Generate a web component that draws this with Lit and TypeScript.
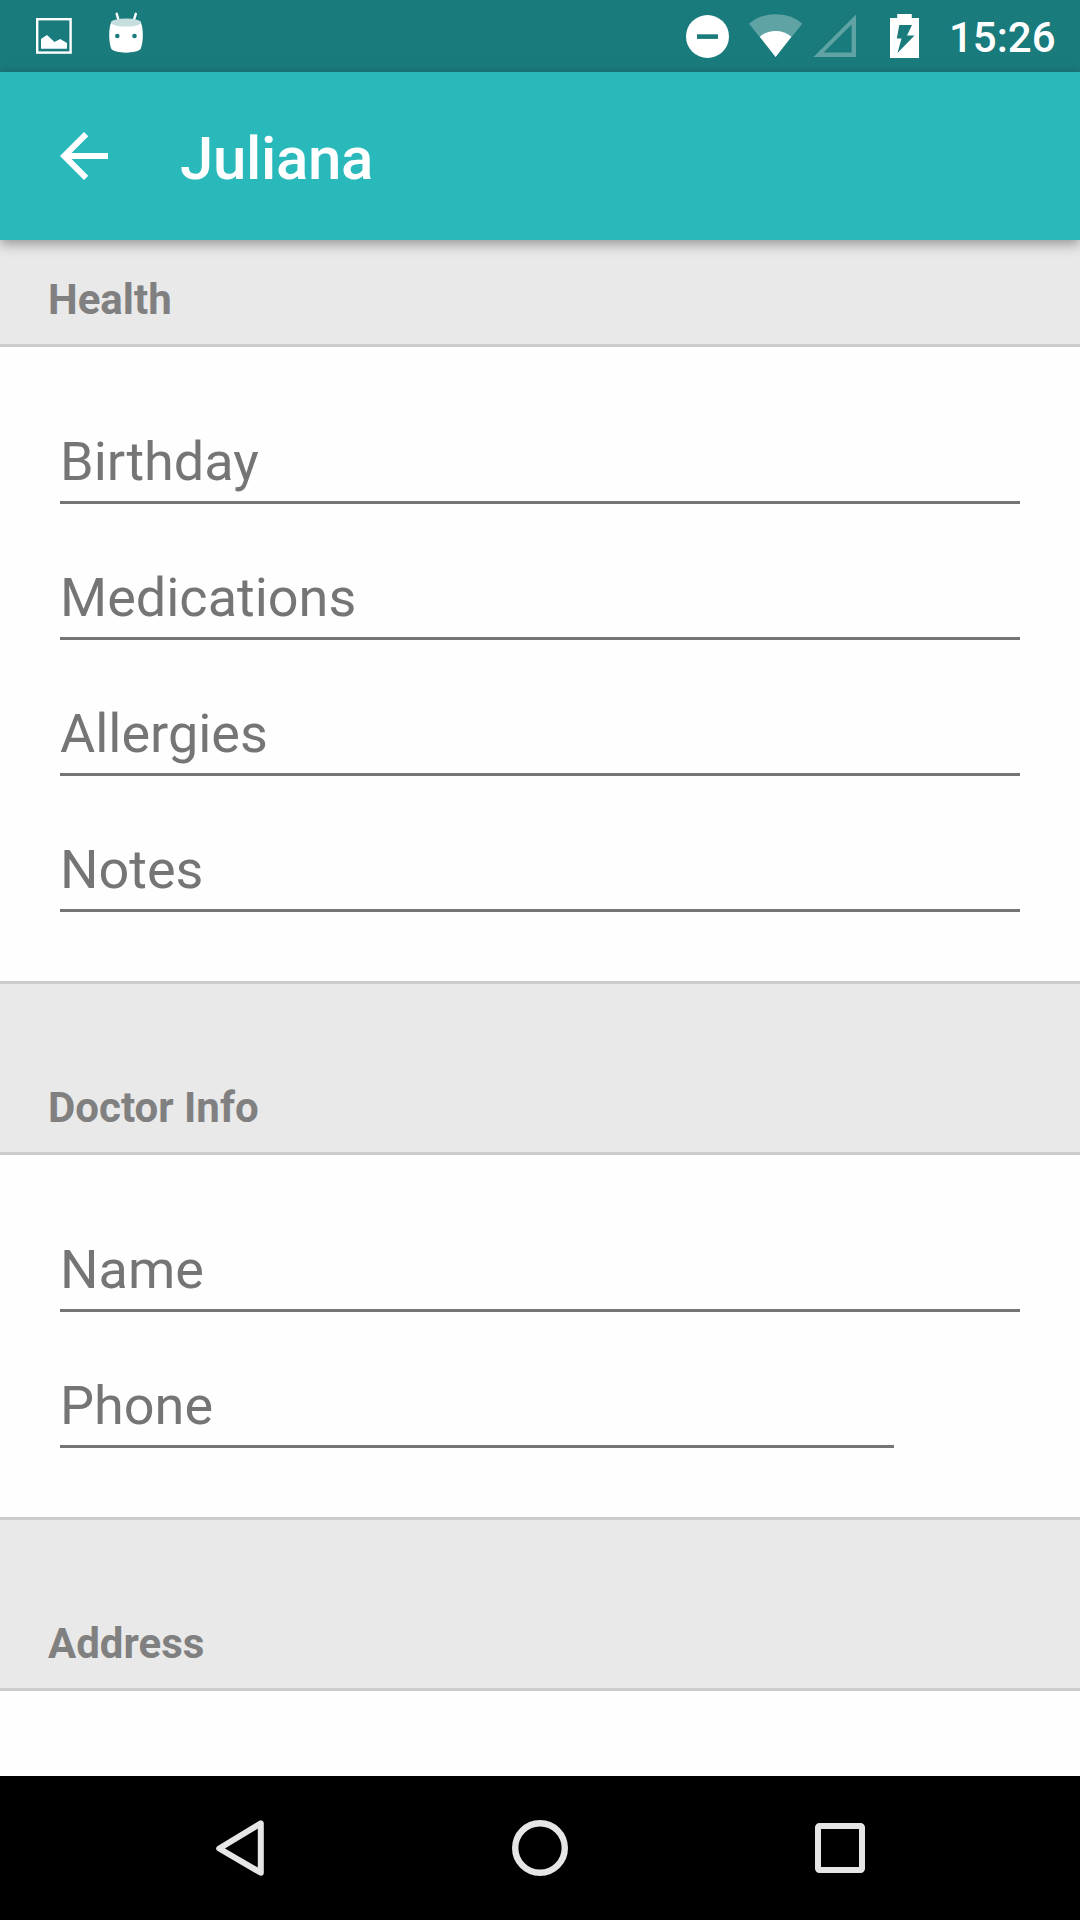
import { LitElement, html, css } from "lit";
import { customElement, property } from "lit/decorators.js";
import { classMap } from "lit/directives/class-map.js";

interface Field {
  label: string;
  short?: boolean;
}

interface Section {
  title: string;
  fields: Field[];
}

const SECTIONS: Section[] = [
  {
    title: "Health",
    fields: [
      { label: "Birthday" },
      { label: "Medications" },
      { label: "Allergies" },
      { label: "Notes" },
    ],
  },
  { title: "Doctor Info", fields: [{ label: "Name" }, { label: "Phone", short: true }] },
  { title: "Address", fields: [] },
];

@customElement("status-bar")
class StatusBar extends LitElement {
  @property() time = "";

  static styles = css`
    :host {
      display: flex;
      align-items: stretch;
      height: 72px;
      background: #1a7b7c;
      color: #fff;
    }
    svg {
      display: block;
      flex: none;
    }
    .spacer {
      flex: 1;
    }
    .time {
      width: 131px;
      margin-left: -1px;
      padding-top: 13px;
      box-sizing: border-box;
      font: 500 42px/49px Roboto, sans-serif;
      white-space: nowrap;
    }
  `;

  render() {
    return html`
      <svg width="160" height="72" viewBox="0 0 160 72">
        <rect x="37.2" y="19.2" width="33.4" height="33.4" fill="none" stroke="#fff" stroke-width="2.4" />
        <path d="M41 39l6-4 7.5 7 5.700-3 6.800 4v5.700H41z" fill="#fff" />
        <path d="M116.700 13.800l2.200 7.400M135.800 13.800l-2.200 7.400" stroke="#fff" stroke-width="2.400" stroke-linecap="round" />
        <path d="M111 23C108.600 28 108.500 42 111.200 48.500C113.500 54 138.500 54 140.800 48.500C143.500 42 143.400 28 141 23z" fill="#fff" />
        <ellipse cx="126" cy="22.600" rx="15.200" ry="4" fill="#c6dede" />
        <circle cx="117.300" cy="36" r="2.300" fill="#1a7b7c" />
        <circle cx="134.500" cy="36" r="2.300" fill="#1a7b7c" />
      </svg>
      <div class="spacer"></div>
      <svg width="270" height="72" viewBox="680 0 270 72">
        <circle cx="707.500" cy="36.500" r="21.500" fill="#fff" />
        <rect x="697" y="34.300" width="21" height="4.600" fill="#1a7b7c" />
        <path d="M775.600 57L749 23.700Q760 14.300 775.600 14.300T802.200 23.700z" fill="#5fa3a4" />
        <path d="M775.600 57L759.800 36.700Q766.500 31 775.600 31T791.400 36.700z" fill="#fff" />
        <path d="M813.500 57L856 14.500V57zM823.600 52.600H851.600V24.500z" fill="#5fa3a4" fill-rule="evenodd" />
        <path d="M897.200 14H911.800V18H919V58H890V18H897.200z" fill="#fff" />
        <path d="M899.300 25H912L907 35.500H914.500L897.500 53L901.500 38.500H896.800z" fill="#1a7b7c" />
      </svg>
      <div class="time">${this.time}</div>
    `;
  }
}

@customElement("app-bar")
class AppBar extends LitElement {
  @property() heading = "";

  static styles = css`
    :host {
      display: flex;
      align-items: center;
      height: 168px;
      padding-left: 48px;
      box-sizing: border-box;
      background: #2ab9bb;
      color: #fff;
      box-shadow: 0 4px 12px rgba(0, 0, 0, 0.36);
      position: relative;
      z-index: 1;
    }
    svg {
      display: block;
      flex: none;
      width: 72px;
      height: 72px;
    }
    .heading {
      margin: 5px 0 0 60px;
      font: 500 60px/71px Roboto, sans-serif;
      letter-spacing: -0.35px;
    }
  `;

  render() {
    return html`
      <svg viewBox="0 0 24 24">
        <path fill="#fff" d="M20 11H7.830l5.590-5.590L12 4l-8 8 8 8 1.410-1.410L7.830 13H20z" />
      </svg>
      <h1 class="heading">${this.heading}</h1>
    `;
  }
}

@customElement("form-section")
class FormSection extends LitElement {
  @property({ attribute: false }) section!: Section;
  @property({ type: Boolean }) first = false;

  static styles = css`
    :host {
      display: block;
    }
    .title {
      margin: 0;
      box-sizing: border-box;
      height: 174px;
      padding: 99px 48px 0;
      border-top: 3px solid #ccc;
      border-bottom: 3px solid #ccc;
      background: #e9e9e9;
      color: #808080;
      font: 700 42px/49px Roboto, sans-serif;
    }
    .title.first {
      height: 107px;
      padding-top: 35px;
      border-top: 0;
    }
    .fields {
      padding: 21px 60px 69px;
    }
    .field {
      box-sizing: border-box;
      height: 136px;
      padding-top: 62px;
      border-bottom: 3px solid #757575;
      color: #757575;
      font: 400 54px/63px Roboto, sans-serif;
    }
    .field.short {
      margin-right: 126px;
    }
  `;

  render() {
    return html`
      <h2 class=${classMap({ title: true, first: this.first })}>${this.section.title}</h2>
      <div class="fields">
        ${this.section.fields.map(
          (f) => html`<div class=${classMap({ field: true, short: !!f.short })}>${f.label}</div>`,
        )}
      </div>
    `;
  }
}

@customElement("nav-bar")
class NavBar extends LitElement {
  static styles = css`
    :host {
      display: flex;
      justify-content: center;
      align-items: center;
      gap: 204px;
      height: 144px;
      background: #000;
    }
    svg {
      display: block;
      width: 96px;
      height: 96px;
      fill: none;
      stroke: #e6e6e6;
      stroke-width: 6;
      stroke-linejoin: round;
    }
  `;

  render() {
    return html`
      <svg viewBox="192 1800 96 96"><path d="M260.800 1823.300V1872.700L219.200 1848.500z" /></svg>
      <svg viewBox="492 1800 96 96"><circle cx="540" cy="1848" r="24.800" stroke-width="6.400" /></svg>
      <svg viewBox="792 1800 96 96"><rect x="818" y="1826" width="44" height="44" rx="1.500" /></svg>
    `;
  }
}

@customElement("app-root")
class AppRoot extends LitElement {
  static styles = css`
    :host {
      display: flex;
      flex-direction: column;
      width: 1080px;
      height: 1920px;
      overflow: hidden;
      background: #fefefe;
    }
    status-bar,
    app-bar,
    nav-bar {
      flex: none;
    }
    .content {
      flex: 1;
      min-height: 0;
      overflow: hidden;
    }
  `;

  render() {
    return html`
      <status-bar time="15:26"></status-bar>
      <app-bar heading="Juliana"></app-bar>
      <main class="content">
        ${SECTIONS.map((s, i) => html`<form-section .section=${s} ?first=${i === 0}></form-section>`)}
      </main>
      <nav-bar></nav-bar>
    `;
  }
}
